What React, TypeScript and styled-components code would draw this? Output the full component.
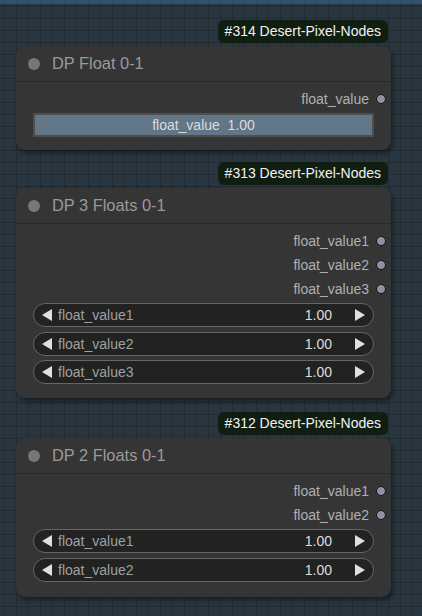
import React from "react";
import styled, { createGlobalStyle } from "styled-components";

const Global = createGlobalStyle`
  html, body { margin: 0; padding: 0; }
  body {
    width: 422px;
    height: 616px;
    overflow: hidden;
    font-family: "Liberation Sans", Arial, sans-serif;
  }
`;

const Canvas = styled.div`
  width: 422px;
  height: 616px;
  box-sizing: border-box;
  border-top: 4px solid #34516b;
  background-color: #29363f;
  background-image:
    linear-gradient(to right, rgba(20, 28, 34, 0.38) 1px, transparent 1px),
    linear-gradient(to bottom, rgba(20, 28, 34, 0.38) 1px, transparent 1px);
  background-size: 12px 12px;
  background-position: 4px 2px;
  display: flex;
  flex-direction: column;
  padding: 16px 31px 0 16px;
`;

const NodeGroup = styled.div<{ $gap: number }>`
  display: flex;
  flex-direction: column;
  align-items: flex-end;
  margin-bottom: ${(p) => p.$gap}px;
`;

const Badge = styled.div`
  background: #0f1e10;
  color: #f2f2f2;
  font-size: 14px;
  line-height: 23px;
  height: 23px;
  padding: 0 7px;
  border-radius: 6px;
  margin-right: 3px;
  margin-bottom: 3px;
  white-space: nowrap;
`;

const Node = styled.div`
  align-self: stretch;
  background: #353535;
  border-radius: 9px;
  box-shadow: 2px 3px 5px rgba(0, 0, 0, 0.45);
  display: flex;
  flex-direction: column;
`;

const TitleBar = styled.div`
  height: 35px;
  border-bottom: 1px solid #292929;
  display: flex;
  align-items: center;
  padding-left: 12px;
  gap: 12px;
`;

const TitleDot = styled.span`
  width: 12px;
  height: 12px;
  border-radius: 50%;
  background: #777;
`;

const Title = styled.span`
  color: #9a9a9a;
  font-size: 16.4px;
`;

const Body = styled.div<{ $bottom: number }>`
  display: flex;
  flex-direction: column;
  padding: 5px 0 ${(p) => p.$bottom}px;
`;

const OutputRow = styled.div`
  height: 24px;
  display: flex;
  align-items: center;
  justify-content: flex-end;
  padding-right: 5px;
  gap: 7px;
`;

const OutputLabel = styled.span`
  color: #b0b0b0;
  font-size: 14px;
`;

const OutputDot = styled.span`
  width: 8px;
  height: 8px;
  border-radius: 50%;
  background: #9090a0;
  border: 1px solid #151515;
`;

const Widgets = styled.div`
  display: flex;
  flex-direction: column;
  gap: 4.5px;
  padding: 1px 17px 0 17px;
  margin-top: 1px;
`;

const Slider = styled.div`
  height: 24px;
  box-sizing: border-box;
  background: #617686;
  border: 2px solid #4e4e4e;
  display: flex;
  align-items: center;
  justify-content: center;
  color: #dcdcdc;
  font-size: 14px;
  white-space: pre;
`;

const Number = styled.div`
  height: 24px;
  box-sizing: border-box;
  background: #222;
  border: 1px solid #666;
  border-radius: 12px;
  display: flex;
  align-items: center;
  padding: 0 7px 0 7px;
  font-size: 14px;
`;

const Arrow = styled.svg`
  width: 12px;
  height: 14px;
  flex: none;
`;

const NumLabel = styled.span`
  color: #a0a0a0;
  margin-left: 5px;
  flex: 1;
`;

const NumValue = styled.span`
  color: #dddddd;
  margin-right: 22px;
`;

const Left = () => (
  <Arrow viewBox="0 0 12 14">
    <polygon points="11,1 11,13 1,7" fill="#e0e0e0" />
  </Arrow>
);
const Right = () => (
  <Arrow viewBox="0 0 12 14">
    <polygon points="1,1 1,13 11,7" fill="#e0e0e0" />
  </Arrow>
);

type NodeSpec = {
  id: number;
  title: string;
  outputs: string[];
  single?: boolean;
  gap: number;
  bottom: number;
};

const nodes: NodeSpec[] = [
  { id: 314, title: "DP Float 0-1", outputs: ["float_value"], single: true, gap: 12, bottom: 13 },
  { id: 313, title: "DP 3 Floats 0-1", outputs: ["float_value1", "float_value2", "float_value3"], gap: 14, bottom: 14 },
  { id: 312, title: "DP 2 Floats 0-1", outputs: ["float_value1", "float_value2"], gap: 0, bottom: 15 },
];

export default function App() {
  return (
    <>
      <Global />
      <Canvas>
        {nodes.map((n) => (
          <NodeGroup key={n.id} $gap={n.gap}>
            <Badge>#{n.id} Desert-Pixel-Nodes</Badge>
            <Node>
              <TitleBar>
                <TitleDot />
                <Title>{n.title}</Title>
              </TitleBar>
              <Body $bottom={n.bottom}>
                {n.outputs.map((o) => (
                  <OutputRow key={o}>
                    <OutputLabel>{o}</OutputLabel>
                    <OutputDot />
                  </OutputRow>
                ))}
                <Widgets>
                  {n.single ? (
                    <Slider>{"float_value  1.00"}</Slider>
                  ) : (
                    n.outputs.map((o) => (
                      <Number key={o}>
                        <Left />
                        <NumLabel>{o}</NumLabel>
                        <NumValue>1.00</NumValue>
                        <Right />
                      </Number>
                    ))
                  )}
                </Widgets>
              </Body>
            </Node>
          </NodeGroup>
        ))}
      </Canvas>
    </>
  );
}
